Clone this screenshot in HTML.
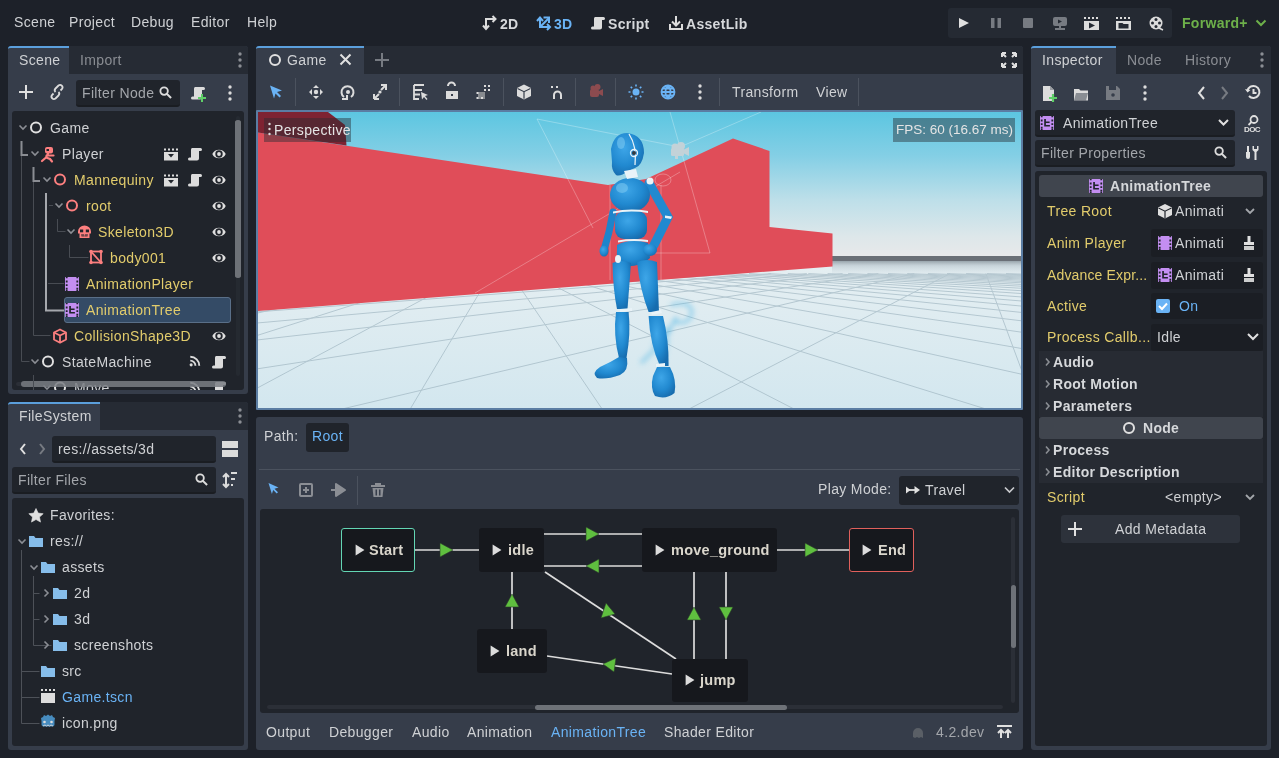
<!DOCTYPE html>
<html><head><meta charset="utf-8">
<style>
*{box-sizing:border-box;margin:0;padding:0}
html,body{width:1279px;height:758px;overflow:hidden;background:#1d2129;font-family:"Liberation Sans",sans-serif;font-size:14px;color:#cfd1d4}
.a{position:absolute}
.t{position:absolute;white-space:nowrap;line-height:16px;letter-spacing:0.35px;will-change:transform}
.b{font-weight:bold;letter-spacing:0.3px}
.panel{position:absolute;background:#363d4a;border-radius:3px}
.tabbar{position:absolute;background:#262b34}
.tab{position:absolute;background:#363d4a;border-top:2px solid #5b9fdc}
.box{position:absolute;background:#20242b;border-radius:3px}
.le{position:absolute;background:#20242b;border-radius:3px;border-bottom:2px solid #1a1d22}
.dim{color:#8a8d93}
.yel{color:#e2cc6c}
.blue{color:#6ab3f5}
svg.ov{position:absolute;left:0;top:0;width:1279px;height:758px;overflow:visible}
</style></head><body>
<svg width="0" height="0" style="position:absolute">
<defs>
<symbol id="chev" viewBox="0 0 10 10"><path d="M1.5 3.5 L5 7 L8.5 3.5" fill="none" stroke="#8b8e94" stroke-width="1.6"/></symbol>
<symbol id="chevr" viewBox="0 0 10 10"><path d="M3.5 1.5 L7 5 L3.5 8.5" fill="none" stroke="#8b8e94" stroke-width="1.6"/></symbol>
<symbol id="eye" viewBox="0 0 14 14"><path d="M0.3 7C2.5 1.2 11.5 1.2 13.7 7C11.5 12.8 2.5 12.8 0.3 7Z" fill="#e0e0e0"/><circle cx="7" cy="7" r="3.7" fill="#20242b"/><circle cx="7" cy="7" r="1.9" fill="#e0e0e0"/></symbol>
<symbol id="clap" viewBox="0 0 16 14"><rect x="1" y="5" width="14" height="8.5" fill="#dcdcdc"/><path d="M1 1.5h2v2h-2zM5 1.5h2v2h-2zM9 1.5h2v2h-2zM13 1.5h2v2h-2z" fill="#dcdcdc"/><path d="M5 7h6l-3 3.5z" fill="#20242b"/></symbol>
<symbol id="scr" viewBox="0 0 14 14"><path d="M4 1h8.5a1.5 1.5 0 0 1 0 3H11v7.5a2 2 0 0 1-2 2H1.5a1.5 1.5 0 0 1 0-3H3V3a2 2 0 0 1 1-2z" fill="#dcdcdc"/></symbol>
<symbol id="sig" viewBox="0 0 14 14"><circle cx="2.5" cy="11.5" r="1.8" fill="#dcdcdc"/><path d="M1.5 6.5a6 6 0 0 1 6 6M1.5 2a10.5 10.5 0 0 1 10.5 10.5" fill="none" stroke="#dcdcdc" stroke-width="2.2"/></symbol>
<symbol id="folder" viewBox="0 0 16 14"><path d="M1 2h5l1.5 2H15v9H1z" fill="#86bdea"/></symbol>
<symbol id="animp" viewBox="0 0 14 14"><rect x="0" y="0" width="14" height="14" fill="#c38ef1"/><path d="M0.8 0h1.8v1.2H0.8zM0.8 3.6h1.8v1.8H0.8zM0.8 7.2h1.8v1.8H0.8zM0.8 10.8h1.8v1.8H0.8zM11.4 0h1.8v1.2h-1.8zM11.4 3.6h1.8v1.8h-1.8zM11.4 7.2h1.8v1.8h-1.8zM11.4 10.8h1.8v1.8h-1.8zM0.8 12.8h1.8V14H0.8zM11.4 12.8h1.8V14h-1.8z" fill="#20242b"/></symbol>
<symbol id="animt" viewBox="0 0 14 14"><rect x="0" y="0" width="14" height="14" fill="#c38ef1"/><path d="M0.8 0h1.8v1.2H0.8zM0.8 3.6h1.8v1.8H0.8zM0.8 7.2h1.8v1.8H0.8zM0.8 10.8h1.8v1.8H0.8zM11.4 0h1.8v1.2h-1.8zM11.4 3.6h1.8v1.8h-1.8zM11.4 7.2h1.8v1.8h-1.8zM11.4 10.8h1.8v1.8h-1.8zM0.8 12.8h1.8V14H0.8zM11.4 12.8h1.8V14h-1.8z" fill="#20242b"/><path d="M4.2 2.9h1.7v7.6H4.2zM5.9 5.6h3.7v1.5H5.9zM4.2 8.9h5.7v1.6H4.2z" fill="#20242b"/></symbol>
<symbol id="search" viewBox="0 0 14 14"><circle cx="5.5" cy="5.5" r="4" fill="none" stroke="#dcdcdc" stroke-width="2"/><path d="M8.5 8.5L13 13" stroke="#dcdcdc" stroke-width="2.2"/></symbol>
<symbol id="kebab" viewBox="0 0 4 16"><circle cx="2" cy="2" r="1.7" fill="#dcdcdc"/><circle cx="2" cy="8" r="1.7" fill="#dcdcdc"/><circle cx="2" cy="14" r="1.7" fill="#dcdcdc"/></symbol>
<symbol id="kebabg" viewBox="0 0 4 16"><circle cx="2" cy="2" r="1.7" fill="#8b8e94"/><circle cx="2" cy="8" r="1.7" fill="#8b8e94"/><circle cx="2" cy="14" r="1.7" fill="#8b8e94"/></symbol>
<symbol id="ptri" viewBox="0 0 10 10"><path d="M1.5 0L9.5 5L1.5 10z" fill="#dcdcdc"/></symbol>
</defs>
</svg>

<!-- MENU -->
<div class="t" style="left:14px;top:14px">Scene</div>
<div class="t" style="left:69px;top:14px">Project</div>
<div class="t" style="left:131px;top:14px">Debug</div>
<div class="t" style="left:191px;top:14px">Editor</div>
<div class="t" style="left:247px;top:14px">Help</div>
<!-- TOP CENTER -->
<svg class="ov">
<!-- 2D icon -->
<g fill="none" stroke="#dcdcdc" stroke-width="2">
<path d="M486 29V19h9"/><path d="M483 25.5l3 3.5 3-3.5"/><path d="M492.5 16l3 3-3 3"/>
</g>
<!-- 3D icon -->
<g fill="none" stroke="#6ab3f5" stroke-width="2">
<path d="M540 28V18"/><path d="M537 21l3-3.5 3 3.5"/><path d="M540 27H549.5"/><path d="M547 24l3 3-3 3"/><path d="M540.5 26.5L548.5 18.5"/><path d="M543.5 17.5h5.5v5.5"/>
</g>
<!-- script -->
<use href="#scr" x="591" y="16" width="14" height="14"/>
<!-- assetlib -->
<g fill="none" stroke="#dcdcdc" stroke-width="2"><path d="M676 16v9"/><path d="M672 21.5l4 4 4-4"/><path d="M670 24v5h12v-5"/></g>
</svg>
<div class="t b" style="left:500px;top:16px;color:#d6d8db">2D</div>
<div class="t b blue" style="left:554px;top:16px">3D</div>
<div class="t b" style="left:608px;top:16px;color:#d6d8db">Script</div>
<div class="t b" style="left:686px;top:16px;color:#d6d8db">AssetLib</div>

<!-- PLAY BAR -->
<div class="a" style="left:948px;top:8px;width:224px;height:30px;background:#252a33;border-radius:3px"></div>
<svg class="ov">
<path d="M959 18L969 23L959 28z" fill="#e0e0e0"/>
<rect x="991" y="18" width="3.5" height="10" fill="#777b82"/><rect x="997.5" y="18" width="3.5" height="10" fill="#777b82"/>
<rect x="1023" y="18" width="10" height="10" rx="1" fill="#777b82"/>
<rect x="1053" y="17" width="14" height="9" rx="2" fill="#777b82"/><path d="M1058 19.5l4 2-4 2z" fill="#252a33"/><rect x="1059" y="26" width="2" height="2.5" fill="#777b82"/><rect x="1055" y="28" width="10" height="2" fill="#777b82"/>
<g><rect x="1084" y="21" width="15" height="9" fill="#dcdcdc"/><path d="M1084 17h2v2h-2zM1088 17h2v2h-2zM1092 17h2v2h-2zM1096 17h2v2h-2z" fill="#dcdcdc"/><path d="M1089 22.5l6 3-6 3z" fill="#252a33"/></g>
<g><rect x="1116" y="21" width="15" height="9" fill="#dcdcdc"/><path d="M1116 17h2v2h-2zM1120 17h2v2h-2zM1124 17h2v2h-2zM1128 17h2v2h-2z" fill="#dcdcdc"/><path d="M1118.5 23h4l1 1h5v4.5h-10z" fill="#252a33"/></g>
<g><circle cx="1156" cy="23" r="6.5" fill="#dcdcdc"/><circle cx="1156" cy="19.5" r="1.5" fill="#252a33"/><circle cx="1156" cy="26.5" r="1.5" fill="#252a33"/><circle cx="1152.5" cy="23" r="1.5" fill="#252a33"/><circle cx="1159.5" cy="23" r="1.5" fill="#252a33"/><path d="M1159 28l4 2" stroke="#dcdcdc" stroke-width="1.5"/></g>
<path d="M1256.5 20.5l4.5 4.5 4.5-4.5" fill="none" stroke="#6db04a" stroke-width="2"/>
</svg>
<div class="t b" style="left:1182px;top:15px;color:#6db04a">Forward+</div>
<!-- LEFT DOCK: Scene -->
<div class="panel" style="left:8px;top:46px;width:240px;height:348px"></div>
<div class="tabbar" style="left:69px;top:46px;width:179px;height:28px;border-top-right-radius:3px"></div>
<div class="tab" style="left:8px;top:46px;width:61px;height:28px;border-top-left-radius:3px"></div>
<div class="t" style="left:19px;top:52px">Scene</div>
<div class="t dim" style="left:80px;top:52px">Import</div>
<div class="le" style="left:76px;top:80px;width:104px;height:27px"></div>
<div class="t dim" style="left:82px;top:85px;color:#a3a6ab">Filter Node</div>
<div class="box" style="left:12px;top:111px;width:232px;height:279px"></div>
<svg class="ov">
<use href="#kebabg" x="238" y="52" width="4" height="16"/>
<path d="M26 85v14M19 92h14" stroke="#e0e0e0" stroke-width="2"/>
<g fill="none" stroke="#dcdcdc" stroke-width="1.8"><path d="M53.5 93.5l-1.5 1.5a2.5 2.5 0 0 0 3.5 3.5l3-3a2.5 2.5 0 0 0 0-3.5"/><path d="M60.5 90.5l1.5-1.5a2.5 2.5 0 0 0-3.5-3.5l-3 3a2.5 2.5 0 0 0 0 3.5"/></g>
<use href="#search" x="159" y="86" width="13" height="13"/>
<use href="#scr" x="191" y="86" width="14" height="14"/>
<path d="M202 94v8M198 98h8" stroke="#5fd068" stroke-width="2"/>
<use href="#kebab" x="228" y="85" width="4" height="16"/>
<!-- scrollbar -->
<rect x="235" y="120" width="6" height="158" rx="3" fill="#6b6f76"/>
<rect x="236" y="116" width="4" height="260" rx="2" fill="#2a2e36" opacity="0.6"/>
<rect x="235" y="120" width="6" height="158" rx="3" fill="#6e7278"/>
<defs><clipPath id="clipTree"><rect x="12" y="111" width="232" height="279"/></clipPath></defs>
<!-- tree lines -->
<g stroke="#484c53" stroke-width="1" fill="none">
<path d="M21.5 155v206.5h8"/>
<path d="M33.5 181v154.5h17"/>
<path d="M49 205.5h4"/>
<path d="M57.5 219v12.5h8"/>
<path d="M69.5 245v12.5h19"/>
<path d="M48 283.5h16"/>
<path d="M33.5 375v15"/>
</g>
<path d="M21.5 141v14h6.5" stroke="#8a8d93" stroke-width="2" fill="none"/>
<path d="M33.5 167v14h6.5" stroke="#8a8d93" stroke-width="2" fill="none"/>
<path d="M46 193v117.5h18" stroke="#a5a8ad" stroke-width="2" fill="none"/>
<!-- arrows -->
<use href="#chev" x="18" y="122" width="10" height="10"/>
<use href="#chev" x="30" y="148" width="10" height="10"/>
<use href="#chev" x="42" y="174" width="10" height="10"/>
<use href="#chev" x="54" y="200" width="10" height="10"/>
<use href="#chev" x="66" y="226" width="10" height="10"/>
<use href="#chev" x="30" y="356" width="10" height="10"/>
<g clip-path="url(#clipTree)"><use href="#chev" x="42" y="382" width="10" height="10"/></g>
<!-- icons -->
<circle cx="36" cy="127.5" r="5" fill="none" stroke="#e0e0e0" stroke-width="2"/>
<g><rect x="45" y="147" width="8" height="6.5" rx="2" fill="#fc7f7f"/><rect x="46.5" y="149" width="2.5" height="2" fill="#20242b"/><path d="M48 153.5l-2 4 M46.5 155.5h7 M46 157.5l-4 3.5 M46 157.5l4 1.5 2 2.5" stroke="#fc7f7f" stroke-width="2.2" fill="none" stroke-linecap="round"/></g>
<circle cx="60" cy="179.5" r="5" fill="none" stroke="#fc7f7f" stroke-width="2"/>
<circle cx="72" cy="205.5" r="5" fill="none" stroke="#fc7f7f" stroke-width="2"/>
<g><path d="M78 231.5a6.5 6 0 0 1 13 0v2h-1.5v4.5h-10v-4.5H78z" fill="#fc7f7f"/><rect x="80" y="229.5" width="3.2" height="2.8" fill="#20242b"/><rect x="85.8" y="229.5" width="3.2" height="2.8" fill="#20242b"/><path d="M81.5 234h6v2.5h-6z" fill="#20242b"/><path d="M83 234v1.2M84.5 234v1.2M86 234v1.2M83 236.5v-1.2M84.5 236.5v-1.2M86 236.5v-1.2" stroke="#fc7f7f" stroke-width="0.9"/></g>
<g fill="none" stroke="#fc7f7f" stroke-width="1.8"><rect x="91" y="251.5" width="10" height="11"/><path d="M91 251.5l10 11"/></g>
<g fill="#fc7f7f"><circle cx="91" cy="251.5" r="1.8"/><circle cx="101" cy="251.5" r="1.8"/><circle cx="91" cy="262.5" r="1.8"/><circle cx="101" cy="262.5" r="1.8"/></g>
<use href="#animp" x="65" y="277" width="14" height="14"/>
<use href="#animt" x="65" y="303" width="14" height="14"/>
<g fill="none" stroke="#fc7f7f" stroke-width="1.8" stroke-linejoin="round"><path d="M60 329.5l6 3v7l-6 3.2-6-3.2v-7z"/><path d="M54 332.5l6 3 6-3M60 335.5v7"/></g>
<circle cx="48" cy="361.5" r="5" fill="none" stroke="#e0e0e0" stroke-width="2"/>
<g clip-path="url(#clipTree)"><circle cx="60" cy="387.5" r="5" fill="none" stroke="#e0e0e0" stroke-width="2"/></g>
<!-- right icons -->
<use href="#clap" x="163" y="147" width="16" height="14"/>
<use href="#scr" x="188" y="147" width="14" height="14"/>
<use href="#eye" x="212" y="147" width="14" height="14"/>
<use href="#clap" x="163" y="173" width="16" height="14"/>
<use href="#scr" x="188" y="173" width="14" height="14"/>
<use href="#eye" x="212" y="173" width="14" height="14"/>
<use href="#eye" x="212" y="199" width="14" height="14"/>
<use href="#eye" x="212" y="225" width="14" height="14"/>
<use href="#eye" x="212" y="251" width="14" height="14"/>
<use href="#eye" x="212" y="329" width="14" height="14"/>
<use href="#sig" x="189" y="355" width="12" height="12"/>
<use href="#scr" x="212" y="355" width="14" height="14"/>
<g clip-path="url(#clipTree)"><use href="#sig" x="189" y="381" width="12" height="12"/>
<use href="#scr" x="212" y="381" width="14" height="14"/></g>
</svg>
<!-- selection -->
<div class="a" style="left:64px;top:297px;width:167px;height:26px;background:#344b66;border:1px solid #5a6f88;border-radius:3px"></div>
<div class="t" style="left:50px;top:120px">Game</div>
<div class="t" style="left:62px;top:146px">Player</div>
<div class="t yel" style="left:74px;top:172px">Mannequiny</div>
<div class="t yel" style="left:86px;top:198px">root</div>
<div class="t yel" style="left:98px;top:224px">Skeleton3D</div>
<div class="t yel" style="left:110px;top:250px">body001</div>
<div class="t yel" style="left:86px;top:276px">AnimationPlayer</div>
<div class="t yel" style="left:86px;top:302px">AnimationTree</div>
<div class="t yel" style="left:74px;top:328px">CollisionShape3D</div>
<div class="t" style="left:62px;top:354px">StateMachine</div>
<div class="a" style="left:12px;top:380px;width:232px;height:10px;overflow:hidden"><div class="t" style="left:62px;top:0px">Move</div></div>
<svg class="ov">
<use href="#animt" x="65" y="303" width="14" height="14"/>
<rect x="16" y="382" width="8" height="4" rx="2" fill="#2b2f37"/>
<rect x="21" y="381" width="205" height="6" rx="3" fill="#7a7e84" opacity="0.85"/>
<path d="M33.5 375v15" stroke="#484c53" stroke-width="1"/>
</svg>

<!-- FILESYSTEM DOCK -->
<div class="panel" style="left:8px;top:402px;width:240px;height:348px"></div>
<div class="tabbar" style="left:100px;top:402px;width:148px;height:28px;border-top-right-radius:3px"></div>
<div class="tab" style="left:8px;top:402px;width:92px;height:28px;border-top-left-radius:3px"></div>
<div class="t" style="left:19px;top:408px">FileSystem</div>
<div class="le" style="left:52px;top:436px;width:164px;height:27px"></div>
<div class="t" style="left:58px;top:441px">res://assets/3d</div>
<div class="le" style="left:12px;top:467px;width:204px;height:27px"></div>
<div class="t" style="left:18px;top:472px;color:#a3a6ab">Filter Files</div>
<div class="box" style="left:12px;top:498px;width:232px;height:248px"></div>
<svg class="ov">
<use href="#kebabg" x="238" y="408" width="4" height="16"/>
<path d="M25 444l-4 5 4 5" fill="none" stroke="#e0e0e0" stroke-width="2"/>
<path d="M40 444l4 5-4 5" fill="none" stroke="#777b82" stroke-width="2"/>
<rect x="222" y="441" width="16" height="7" fill="#dcdcdc"/><rect x="222" y="450" width="16" height="7" fill="#dcdcdc"/>
<use href="#search" x="195" y="473" width="13" height="13"/>
<g stroke="#dcdcdc" stroke-width="2" fill="none"><path d="M226 474v13M223 477l3-3 3 3M223 484l3 3 3-3"/><path d="M231 473h6M231 479h4M231 485h2"/></g>
<path d="M36 508.5l2.2 4.6 5 .6-3.7 3.4 1 5-4.5-2.6-4.5 2.6 1-5-3.7-3.4 5-.6z" fill="#e0e0e0" stroke="#e0e0e0" stroke-width="0.6" stroke-linejoin="round"/>
<g stroke="#4d5158" stroke-width="1" fill="none">
<path d="M21.5 550v173.5h18"/>
<path d="M33.5 576v69.5h18"/>
<path d="M33.5 593.5h6M33.5 619.5h6M21.5 671.5h18M21.5 697.5h18"/>
</g>
<use href="#chev" x="17" y="536" width="10" height="10"/>
<use href="#chev" x="29" y="562" width="10" height="10"/>
<use href="#chevr" x="41" y="588" width="10" height="10"/>
<use href="#chevr" x="41" y="614" width="10" height="10"/>
<use href="#chevr" x="41" y="640" width="10" height="10"/>
<use href="#folder" x="28" y="534" width="16" height="14"/>
<use href="#folder" x="40" y="560" width="16" height="14"/>
<use href="#folder" x="52" y="586" width="16" height="14"/>
<use href="#folder" x="52" y="612" width="16" height="14"/>
<use href="#folder" x="52" y="638" width="16" height="14"/>
<use href="#folder" x="40" y="664" width="16" height="14"/>
<g><rect x="41" y="693" width="14" height="10" fill="#dcdcdc"/><path d="M41 689h2v2h-2zM45 689h2v2h-2zM49 689h2v2h-2zM53 689h2v2h-2z" fill="#dcdcdc"/></g>
<g><path d="M41 718l2-1 1-2 2 1 2-1.5 2 1.5 2-1 1 2 2 1-.5 3v3.5a2 2 0 0 1-2 2h-9a2 2 0 0 1-2-2v-3.5z" fill="#478cbf"/><circle cx="44.5" cy="722" r="1.3" fill="#dcdcdc"/><circle cx="51.5" cy="722" r="1.3" fill="#dcdcdc"/><path d="M43 726l2-1 1.5 1 1.5-1 1.5 1 1.5-1 2 1" stroke="#dcdcdc" stroke-width="0.9" fill="none"/></g>
</svg>
<div class="t" style="left:50px;top:507px">Favorites:</div>
<div class="t" style="left:50px;top:533px">res://</div>
<div class="t" style="left:62px;top:559px">assets</div>
<div class="t" style="left:74px;top:585px">2d</div>
<div class="t" style="left:74px;top:611px">3d</div>
<div class="t" style="left:74px;top:637px">screenshots</div>
<div class="t" style="left:62px;top:663px">src</div>
<div class="t blue" style="left:62px;top:689px">Game.tscn</div>
<div class="t" style="left:62px;top:715px">icon.png</div>
<!-- CENTER -->
<div class="panel" style="left:256px;top:46px;width:767px;height:364px"></div>
<div class="tabbar" style="left:364px;top:46px;width:659px;height:28px;border-top-right-radius:3px"></div>
<div class="tab" style="left:256px;top:46px;width:108px;height:28px;border-top-left-radius:3px"></div>
<div class="t" style="left:287px;top:52px">Game</div>
<div class="t" style="left:732px;top:84px">Transform</div>
<div class="t" style="left:816px;top:84px">View</div>
<svg class="ov">
<circle cx="275" cy="60" r="5" fill="none" stroke="#e0e0e0" stroke-width="2"/>
<path d="M340.5 54.5l10 10M350.5 54.5l-10 10" stroke="#e0e0e0" stroke-width="2"/>
<path d="M382 53v14M375 60h14" stroke="#777b82" stroke-width="2"/>
<g stroke="#e0e0e0" stroke-width="2" fill="none"><path d="M1002 53h4M1002 53v4M1002 53l4 4M1016 53h-4M1016 53v4M1016 53l-4 4M1002 67h4M1002 67v-4M1002 67l4-4M1016 67h-4M1016 67v-4M1016 67l-4-4"/></g>
<!-- toolbar -->
<path d="M270 85.5l12 5-5 1.5 4 4-1.5 1.5-4-4-1.5 5z" fill="#6ab3f5"/>
<g stroke="#4b525e" stroke-width="1"><path d="M295.5 78v28M399.5 78v28M503.5 78v28M575.5 78v28M615.5 78v28M719.5 78v28M858.5 78v28"/></g>
<g fill="#dcdcdc"><circle cx="316" cy="92" r="2.2"/><path d="M316 85l-3 3h6zM316 99l-3-3h6zM309 92l3-3v6zM323 92l-3-3v6z"/></g>
<g fill="none" stroke="#dcdcdc" stroke-width="2"><path d="M344 97a6 6 0 1 1 7 0"/></g><circle cx="348" cy="92" r="2" fill="#dcdcdc"/><path d="M342 99h5v-4" fill="none" stroke="#dcdcdc" stroke-width="2"/>
<g fill="none" stroke="#dcdcdc" stroke-width="2"><path d="M381 85h5v5M386 85l-5 5M374 99v-5M374 99h5M374 99l5-5"/></g><circle cx="380" cy="92" r="1.6" fill="#dcdcdc"/>
<g fill="none" stroke="#dcdcdc" stroke-width="1.8"><path d="M414 85h10M414 85v14h5M414 90h8M414 94.5h6"/></g><path d="M421 92l7 3-3 1 2.5 3-1 1-2.5-3-2 2.5z" fill="#dcdcdc"/>
<g><path d="M448 86a3.5 3.5 0 0 1 7 0" fill="none" stroke="#dcdcdc" stroke-width="2"/><rect x="446" y="91" width="12" height="8" fill="#dcdcdc"/><rect x="451" y="94" width="2" height="2" fill="#363d4a"/></g>
<g fill="#dcdcdc"><rect x="478" y="92" width="7" height="7" fill="#888b90"/><path d="M484 85h2v2h-2zM488 85h2v2h-2zM484 89h2v2h-2zM488 89h2v2h-2zM476.5 92h2v2h-2zM476.5 97h2v2h-2zM481 97h2v2h-2z"/></g>
<g><path d="M524 84.5l7 3.5v8l-7 3.5-7-3.5v-8z" fill="#dcdcdc"/><path d="M517.5 88.5l6.5 3.2 6.5-3.2M524 91.7v7" stroke="#363d4a" stroke-width="1.2" fill="none"/></g>
<g><rect x="551" y="86" width="2" height="2" fill="#dcdcdc"/><rect x="556" y="86" width="2" height="2" fill="#dcdcdc"/><path d="M554 99v-4a3.5 3.5 0 0 1 7 0v4" fill="none" stroke="#dcdcdc" stroke-width="2"/></g>
<g fill="#8c4b4f"><rect x="590" y="89" width="9" height="8" rx="2"/><circle cx="593" cy="88" r="2.5"/><circle cx="597.5" cy="87" r="3"/><path d="M599 91l4-2v7l-4-2z"/></g>
<g fill="#6ab3f5"><circle cx="636" cy="92" r="3.5"/></g><g stroke="#6ab3f5" stroke-width="1.6"><path d="M636 84.5v2M636 97.5v2M628.5 92h2M641.5 92h2M630.7 86.7l1.4 1.4M639.9 95.9l1.4 1.4M630.7 97.3l1.4-1.4M639.9 88.1l1.4-1.4"/></g>
<g fill="none" stroke="#6ab3f5" stroke-width="1.8"><circle cx="668" cy="92" r="6.5"/><path d="M661.5 92h13M668 85.5c-3.5 3.5-3.5 9.5 0 13M668 85.5c3.5 3.5 3.5 9.5 0 13M662.5 88.5h11M662.5 95.5h11"/></g>
<use href="#kebab" x="698" y="84" width="4" height="16"/>
</svg>

<!-- VIEWPORT -->
<div class="a" style="left:256px;top:110px;width:767px;height:300px;background:#5b7da3;border-radius:1px"></div>
<svg class="ov" style="clip-path:inset(112px 258px 350px 258px)">
<defs>
<linearGradient id="sky" x1="0" y1="0" x2="0" y2="1">
<stop offset="0" stop-color="#5cc6e1"/><stop offset="0.3" stop-color="#84cfe5"/><stop offset="0.6" stop-color="#bddfe9"/><stop offset="0.85" stop-color="#dde7ea"/><stop offset="1" stop-color="#e9e9ea"/>
</linearGradient>
<linearGradient id="floor" x1="0" y1="0" x2="0" y2="1">
<stop offset="0" stop-color="#e6eff2"/><stop offset="1" stop-color="#d3e7ef"/>
</linearGradient>
<radialGradient id="shadow" cx="0.5" cy="0.5" r="0.5"><stop offset="0" stop-color="#56b8e0" stop-opacity="0.8"/><stop offset="1" stop-color="#56b8e0" stop-opacity="0"/></radialGradient>
</defs>
<rect x="258" y="112" width="763" height="146" fill="url(#sky)"/>
<rect x="258" y="257" width="763" height="151" fill="url(#floor)"/>
<!-- horizon band -->
<rect x="832" y="256" width="190" height="5" fill="#6a6f76"/>
<!-- grid lines -->
<defs><linearGradient id="hz" x1="0" y1="0" x2="0" y2="1"><stop offset="0" stop-color="#8f9ca3" stop-opacity="0.9"/><stop offset="0.3" stop-color="#b5c3ca" stop-opacity="0.6"/><stop offset="1" stop-color="#d5e3e9" stop-opacity="0"/></linearGradient></defs><rect x="832" y="261" width="190" height="16" fill="url(#hz)"/>
<g stroke="#98afbb" stroke-width="1" fill="none" opacity="0.6">
<path d="M209.0 273.8L213.2 273.6"/>
<path d="M208.2 275.1L233.5 273.6"/>
<path d="M208.4 276.4L252.8 273.6"/>
<path d="M208.7 278.0L273.0 273.6"/>
<path d="M209.1 279.9L292.4 273.6"/>
<path d="M209.6 282.1L312.5 273.6"/>
<path d="M208.3 285.1L332.6 273.6"/>
<path d="M208.8 288.7L352.1 273.6"/>
<path d="M209.4 293.4L372.1 273.6"/>
<path d="M210.2 299.7L391.7 273.6"/>
<path d="M211.4 308.8L411.7 273.6"/>
<path d="M208.9 324.1L431.4 273.6"/>
<path d="M1071.0 276.3L1057.5 273.6"/>
<path d="M210.6 350.3L451.3 273.6"/>
<path d="M1070.9 292.1L1021.6 273.6"/>
<path d="M214.4 411.0L471.0 273.6"/>
<path d="M1053.8 457.1L985.8 273.6"/>
<path d="M381.3 457.5L490.9 273.6"/>
<path d="M598.9 455.8L950.0 273.6"/>
<path d="M632.2 453.6L510.7 273.6"/>
<path d="M217.0 438.6L914.2 273.6"/>
<path d="M873.4 449.8L530.6 273.6"/>
<path d="M216.5 375.1L878.3 273.6"/>
<path d="M1057.0 431.1L550.4 273.6"/>
<path d="M216.3 344.6L842.5 273.6"/>
<path d="M1063.7 383.6L570.3 273.6"/>
<path d="M208.3 327.4L806.8 273.6"/>
<path d="M1067.6 356.5L590.0 273.6"/>
<path d="M209.6 315.4L771.1 273.6"/>
<path d="M1070.1 339.1L610.1 273.6"/>
<path d="M210.5 307.0L734.9 273.6"/>
<path d="M1062.9 325.8L629.7 273.6"/>
<path d="M211.1 300.7L699.2 273.6"/>
<path d="M1065.3 317.0L649.3 273.6"/>
<path d="M211.6 295.8L663.5 273.6"/>
<path d="M1067.2 310.3L669.5 273.6"/>
<path d="M208.2 292.1L627.9 273.6"/>
<path d="M1068.7 304.9L689.0 273.6"/>
<path d="M208.9 289.0L591.4 273.6"/>
<path d="M1069.9 300.6L709.2 273.6"/>
<path d="M209.4 286.3L555.8 273.6"/>
<path d="M1070.9 296.9L728.7 273.6"/>
<path d="M209.9 284.1L520.2 273.6"/>
<path d="M1067.0 293.6L749.0 273.6"/>
<path d="M210.3 282.2L484.7 273.6"/>
<path d="M1068.1 291.0L768.5 273.6"/>
<path d="M208.1 280.6L449.2 273.6"/>
<path d="M1069.0 288.8L787.8 273.6"/>
<path d="M208.6 279.2L412.4 273.6"/>
<path d="M1069.8 286.9L808.3 273.6"/>
<path d="M209.0 277.9L376.9 273.6"/>
<path d="M1070.5 285.1L827.6 273.6"/>
<path d="M209.4 276.8L341.4 273.6"/>
<path d="M1067.8 283.5L848.1 273.6"/>
<path d="M209.7 275.8L306.0 273.6"/>
<path d="M1068.5 282.1L867.4 273.6"/>
<path d="M208.1 274.9L268.9 273.6"/>
<path d="M1069.2 280.9L888.0 273.6"/>
<path d="M208.5 274.1L233.5 273.6"/>
<path d="M1069.8 279.8L907.2 273.6"/>
<path d="M1070.3 278.8L927.9 273.6"/>
<path d="M1070.8 277.9L947.0 273.6"/>
<path d="M1068.7 277.0L966.1 273.6"/>
<path d="M1069.3 276.3L986.9 273.6"/>
<path d="M1069.7 275.6L1006.0 273.6"/>
<path d="M1070.2 274.9L1026.9 273.6"/>
<path d="M1070.6 274.3L1045.9 273.6"/>
<path d="M1071.0 273.7L1066.8 273.6"/>
</g>
<!-- wall -->
<path d="M258 132.5L608 185L646 179L733 138.5L769.5 151L769.5 227L832.5 233.5L832.5 266.5L258 311z" fill="#e04d59"/>
<path d="M258 112L328 112L345 125L346.5 145.6L258 132.5z" fill="#7e2332"/>
<!-- camera gizmo -->
<g stroke="#ffffff" stroke-opacity="0.28" stroke-width="1" fill="none">
<path d="M537 119L680 147L710 253L640 253"/><path d="M537 119L593 228"/><path d="M670 112L680 147L761 112"/><path d="M475 293L680 172"/><path d="M610 185V280M661 185V280"/><ellipse cx="663" cy="180" rx="8" ry="6"/>
</g>
<!-- shadow -->
<defs><filter id="blur2" x="-50%" y="-50%" width="200%" height="200%"><feGaussianBlur stdDeviation="2.6"/></filter></defs>
<g filter="url(#blur2)" fill="none" stroke="#4fb6e4" stroke-opacity="0.45" stroke-linecap="round">
<path d="M672 305Q690 300 692 312Q690 325 676 322" stroke-width="4"/><path d="M676 318L664 340L642 362" stroke-width="4"/><path d="M668 330L655 345" stroke-width="5"/><path d="M668 340L662 368" stroke-width="3"/>
</g>
<!-- character -->
<defs>
<radialGradient id="bl" cx="0.4" cy="0.35" r="0.7"><stop offset="0" stop-color="#3ea6e8"/><stop offset="0.6" stop-color="#2189d0"/><stop offset="1" stop-color="#176cae"/></radialGradient>
</defs>
<g stroke="url(#bl)" stroke-linecap="round" fill="none">
<path d="M613 212L609 232L604 250" stroke-width="7" stroke="#1f84cb"/>
<path d="M649 183L668 217L654 245" stroke-width="9" stroke="#2189d0"/>
</g>
<g fill="url(#bl)">
<path d="M611 149Q614 133 627 133Q644 135 644 153Q642 166 635 168L628 171Q620 177 616 175Q611 170 612 162z"/>
<ellipse cx="630" cy="195" rx="20" ry="17"/>
<rect x="615" y="211" width="32" height="28" rx="9"/>
<path d="M617 245Q632 237 648 243L650 258Q640 268 622 266Q616 262 617 250z"/>
<ellipse cx="604" cy="251" rx="4.5" ry="5.5"/>
<ellipse cx="650" cy="250" rx="7" ry="6"/>
<path d="M612.5 263Q621 259 631 263L627.5 309L617 309Q613 290 612.5 263z"/>
<path d="M616 312L628.6 312Q631 332 626.5 358L619 358Q613 335 616 312z"/>
<path d="M627 358Q629 371 620 375Q606 380 597 378Q591 373 600 367Q611 362 619 357z"/>
<path d="M637 262Q647 258 657 262L659 312L648.6 312Q640 290 637 262z"/>
<path d="M648.6 316L663 316Q669 340 668.6 366L660 366Q650 345 648.6 316z"/>
<path d="M657 367L670 367Q677 380 674.5 393Q666 400 655 396Q650 388 653 376z"/>
</g>
<g fill="#e9f3f8">
<path d="M624 171L636 169L638 177L627 179z"/><circle cx="650" cy="181" r="3.5"/><path d="M613 211.5Q630 208 648 211L648 213Q630 210 613 213.5z"/><path d="M618 240.5Q632 238 648 240L648 242Q632 240 618 242.5z"/><ellipse cx="618" cy="259" rx="3" ry="4"/><path d="M620 309L632 308L632 311L620 312z"/><path d="M651 312L661 310L662 313L652 315z"/><path d="M656 364L665 363L665 366L656 367z"/><path d="M665 215.5L672 216.5L671 219L665 218z"/>
</g>
<g fill="#7fcbf2" opacity="0.55"><ellipse cx="621" cy="143" rx="4" ry="6"/><ellipse cx="622" cy="188" rx="6" ry="5"/></g>
<path d="M629 134Q637 146 635 165" fill="none" stroke="#e9f3f8" stroke-width="1.3"/>
<circle cx="634" cy="153" r="3.5" fill="none" stroke="#e9f3f8" stroke-width="1.3"/><circle cx="634" cy="153" r="2" fill="#333a40"/>
<!-- camera icon -->
<g fill="#c3d2d8"><circle cx="675" cy="147" r="3.5"/><circle cx="681" cy="146" r="4"/><rect x="671" y="148" width="13" height="8" rx="1.5"/><path d="M683 150l6-3v9l-6-3z"/><rect x="675" y="155" width="3" height="4"/></g>
</svg>
<div class="a" style="left:264px;top:118px;width:87px;height:24px;background:rgba(40,44,52,0.45)"></div>
<svg class="ov"><g fill="#dcdcdc"><circle cx="269.5" cy="124" r="1.2"/><circle cx="269.5" cy="129" r="1.2"/><circle cx="269.5" cy="134" r="1.2"/></g></svg>
<div class="t" style="left:274px;top:122px;color:#e4e4e4;font-size:14px">Perspective</div>
<div class="a" style="left:893px;top:118px;width:122px;height:24px;background:rgba(40,44,52,0.45)"></div>
<div class="t" style="left:896px;top:122px;color:#e4e4e4;font-size:13.5px;letter-spacing:0px">FPS: 60 (16.67 ms)</div>
<!-- BOTTOM PANEL -->
<div class="panel" style="left:256px;top:417px;width:767px;height:333px"></div>
<div class="t" style="left:264px;top:428px">Path:</div>
<div class="a" style="left:306px;top:423px;width:43px;height:29px;background:#20242b;border-radius:3px"></div>
<div class="t blue" style="left:312px;top:428px">Root</div>
<div class="a" style="left:259px;top:469px;width:761px;height:1px;background:#4b525e"></div>
<div class="t" style="left:818px;top:481px">Play Mode:</div>
<div class="a" style="left:899px;top:476px;width:120px;height:29px;background:#20242b;border-radius:3px"></div>
<div class="t" style="left:925px;top:482px">Travel</div>
<div class="a" style="left:260px;top:509px;width:759px;height:204px;background:#20242b;border-radius:3px"></div>
<svg class="ov">
<path d="M268.5 483l10 4.5-4 1.2 3.5 3.5-1.3 1.3-3.5-3.5-1.3 4z" fill="#6ab3f5"/>
<rect x="300" y="484" width="12" height="12" rx="1" fill="none" stroke="#8b8e94" stroke-width="2"/><path d="M306 487v6M303 490h6" stroke="#8b8e94" stroke-width="2"/>
<path d="M331 490h5M336 484l9 6-9 6z" fill="#8b8e94" stroke="#8b8e94" stroke-width="2" stroke-linejoin="round"/>
<path d="M357.5 476v29" stroke="#4b525e" stroke-width="1"/>
<g fill="#8b8e94"><rect x="371" y="485" width="14" height="2"/><rect x="375" y="483" width="6" height="2"/><path d="M372.5 488h11l-1 9h-9z"/></g>
<g fill="#363d4a"><rect x="375.5" y="489.5" width="1.5" height="6"/><rect x="379" y="489.5" width="1.5" height="6"/></g>
<path d="M908 490h7" stroke="#e0e0e0" stroke-width="1.8"/><path d="M914.5 486l5.5 4-5.5 4z" fill="#e0e0e0"/><path d="M906 486.5l4.5 3.5-4.5 3.5z" fill="#e0e0e0"/>
<path d="M1005 487.5l4.5 4.5 4.5-4.5" fill="none" stroke="#c8cacd" stroke-width="1.7"/>
<!-- graph connections -->
<g stroke="#dcdcdc" stroke-width="1.7" fill="none">
<path d="M415 550H479"/><path d="M544 534H642"/><path d="M544 566H642"/><path d="M777 550H849"/>
<path d="M512 572V629"/><path d="M694 572V659"/><path d="M726 572V659"/>
<path d="M545 572L676 659"/><path d="M547 656L672 674"/>
</g>
<g fill="#5fbf3f" stroke="#2a3a2a" stroke-width="1" stroke-opacity="0.6">
<path d="M440 543L453 550L440 557z"/>
<path d="M586 527L599 534L586 541z"/>
<path d="M599 559L586 566L599 573z"/>
<path d="M805 543L818 550L805 557z"/>
<path d="M505 607L512 594L519 607z"/>
<path d="M687 620L694 607L701 620z"/>
<path d="M719 607L726 620L733 607z"/>
<path d="M601 618L606 603L615 614z"/>
<path d="M616 658L603 664L614 672z"/>
</g>
<!-- scrollbars -->
<rect x="1011" y="517" width="4" height="186" rx="2" fill="#2b2f37"/>
<rect x="1011" y="585" width="5" height="63" rx="2.5" fill="#6e7278"/>
<rect x="267" y="705" width="736" height="4" rx="2" fill="#2b2f37"/>
<rect x="535" y="705" width="252" height="5" rx="2.5" fill="#6e7278"/>
</svg>
<!-- nodes -->
<div class="a" style="left:341px;top:528px;width:74px;height:44px;background:#16181d;border:1px solid #63d6b4;border-radius:3px"></div>
<div class="a" style="left:479px;top:528px;width:65px;height:44px;background:#16181d;border-radius:3px"></div>
<div class="a" style="left:642px;top:528px;width:135px;height:44px;background:#16181d;border-radius:3px"></div>
<div class="a" style="left:849px;top:528px;width:65px;height:44px;background:#16181d;border:1px solid #e0605c;border-radius:3px"></div>
<div class="a" style="left:477px;top:629px;width:70px;height:44px;background:#16181d;border-radius:3px"></div>
<div class="a" style="left:672px;top:659px;width:76px;height:43px;background:#16181d;border-radius:3px"></div>
<svg class="ov">
<use href="#ptri" x="354" y="544" width="11" height="12"/>
<use href="#ptri" x="491" y="544" width="11" height="12"/>
<use href="#ptri" x="654" y="544" width="11" height="12"/>
<use href="#ptri" x="861" y="544" width="11" height="12"/>
<use href="#ptri" x="489" y="645" width="11" height="12"/>
<use href="#ptri" x="684" y="674" width="11" height="12"/>
</svg>
<div class="t b" style="left:369px;top:542px;color:#dad6cc;font-size:14.5px;letter-spacing:0.25px">Start</div>
<div class="t b" style="left:508px;top:542px;color:#dad6cc;font-size:14.5px;letter-spacing:0.25px">idle</div>
<div class="t b" style="left:671px;top:542px;color:#dad6cc;font-size:14.5px;letter-spacing:0.25px">move_ground</div>
<div class="t b" style="left:878px;top:542px;color:#dad6cc;font-size:14.5px;letter-spacing:0.25px">End</div>
<div class="t b" style="left:506px;top:643px;color:#dad6cc;font-size:14.5px;letter-spacing:0.25px">land</div>
<div class="t b" style="left:700px;top:672px;color:#dad6cc;font-size:14.5px;letter-spacing:0.25px">jump</div>

<!-- bottom tabs -->
<div class="t" style="left:266px;top:724px">Output</div>
<div class="t" style="left:329px;top:724px">Debugger</div>
<div class="t" style="left:412px;top:724px">Audio</div>
<div class="t" style="left:467px;top:724px">Animation</div>
<div class="t blue" style="left:551px;top:724px">AnimationTree</div>
<div class="t" style="left:664px;top:724px">Shader Editor</div>
<div class="t" style="left:936px;top:724px;color:#a3a6ab">4.2.dev</div>
<svg class="ov">
<path d="M913 733a5 5 0 0 1 10 0v5l-2-1-2 1-2-1-2 1-2-1z" fill="#5a5f66"/>
<g stroke="#e0e0e0" stroke-width="2" fill="none"><path d="M997 726h15"/><path d="M1001 738v-8M998 733l3-3 3 3M1008 738v-8M1005 733l3-3 3 3"/></g>
</svg>
<!-- RIGHT DOCK -->
<div class="panel" style="left:1031px;top:46px;width:240px;height:704px"></div>
<div class="tabbar" style="left:1116px;top:46px;width:155px;height:28px;border-top-right-radius:3px"></div>
<div class="tab" style="left:1031px;top:46px;width:85px;height:28px;border-top-left-radius:3px"></div>
<div class="t" style="left:1042px;top:52px">Inspector</div>
<div class="t dim" style="left:1127px;top:52px">Node</div>
<div class="t dim" style="left:1185px;top:52px">History</div>
<div class="le" style="left:1035px;top:110px;width:200px;height:27px"></div>
<div class="t" style="left:1063px;top:115px">AnimationTree</div>
<div class="le" style="left:1035px;top:140px;width:200px;height:27px"></div>
<div class="t" style="left:1041px;top:145px;color:#a3a6ab">Filter Properties</div>
<div class="box" style="left:1035px;top:171px;width:232px;height:575px"></div>
<div class="a" style="left:1039px;top:175px;width:224px;height:22px;background:#40454e;border-radius:3px"></div>
<div class="t b" style="left:1110px;top:178px;color:#d6d8db">AnimationTree</div>
<div class="a" style="left:1151px;top:229px;width:112px;height:28px;background:#1b1e24;border-radius:3px"></div>
<div class="a" style="left:1151px;top:262px;width:112px;height:27px;background:#1b1e24;border-radius:3px"></div>
<div class="a" style="left:1151px;top:293px;width:112px;height:26px;background:#1b1e24;border-radius:3px"></div>
<div class="a" style="left:1151px;top:324px;width:112px;height:27px;background:#1b1e24;border-radius:3px"></div>
<div class="a" style="left:1039px;top:351px;width:224px;height:66px;background:#272b33"></div>
<div class="a" style="left:1039px;top:417px;width:224px;height:22px;background:#40454e;border-radius:3px"></div>
<div class="a" style="left:1039px;top:439px;width:224px;height:44px;background:#272b33"></div>
<div class="a" style="left:1061px;top:515px;width:179px;height:28px;background:#2d323b;border-radius:3px"></div>
<div class="t yel" style="left:1047px;top:203px">Tree Root</div>
<div class="t" style="left:1175px;top:203px">Animati</div>
<div class="t yel" style="left:1047px;top:235px">Anim Player</div>
<div class="t" style="left:1175px;top:235px">Animati</div>
<div class="t yel" style="left:1047px;top:267px;letter-spacing:0.15px">Advance Expr...</div>
<div class="t" style="left:1175px;top:267px">Animati</div>
<div class="t yel" style="left:1047px;top:298px">Active</div>
<div class="t blue" style="left:1179px;top:298px">On</div>
<div class="t yel" style="left:1047px;top:329px">Process Callb...</div>
<div class="t" style="left:1157px;top:329px">Idle</div>
<div class="t b" style="left:1053px;top:354px;color:#d6d8db">Audio</div>
<div class="t b" style="left:1053px;top:376px;color:#d6d8db">Root Motion</div>
<div class="t b" style="left:1053px;top:398px;color:#d6d8db">Parameters</div>
<div class="t b" style="left:1143px;top:420px;color:#d6d8db">Node</div>
<div class="t b" style="left:1053px;top:442px;color:#d6d8db">Process</div>
<div class="t b" style="left:1053px;top:464px;color:#d6d8db">Editor Description</div>
<div class="t yel" style="left:1047px;top:489px">Script</div>
<div class="t" style="left:1165px;top:489px">&lt;empty&gt;</div>
<div class="t" style="left:1115px;top:521px">Add Metadata</div>
<svg class="ov">
<use href="#kebabg" x="1260" y="52" width="4" height="16"/>
<g><path d="M1043 86h7l4 4v11h-11z" fill="#dcdcdc"/><path d="M1050 86v4h4" fill="#9a9da2"/><path d="M1053 94v8M1049 98h8" stroke="#5fd068" stroke-width="2.2"/></g>
<g><path d="M1074 89h5l1.5 1.5H1088v10h-14z" fill="#dcdcdc"/><path d="M1076 93h12l-2 7.5h-12z" fill="#363d4a" opacity="0.5"/></g>
<g><path d="M1106 86h11l3 3v11h-14z" fill="#777b82"/><rect x="1109" y="86" width="7" height="4" fill="#363d4a"/><circle cx="1113" cy="95" r="1.8" fill="#363d4a"/></g>
<use href="#kebab" x="1143" y="85" width="4" height="16"/>
<path d="M1204 87l-5 6 5 6" fill="none" stroke="#e0e0e0" stroke-width="2"/>
<path d="M1222 87l5 6-5 6" fill="none" stroke="#777b82" stroke-width="2"/>
<g fill="none" stroke="#e0e0e0" stroke-width="2"><path d="M1247.5 91a6 6 0 1 1 1.5 5"/><path d="M1253.5 89v4h3"/></g><path d="M1245 89l2.5 3.5 3-2.5z" fill="#e0e0e0"/>
<use href="#animt" x="1040" y="116" width="14" height="14"/>
<path d="M1219 120l4.5 4.5 4.5-4.5" fill="none" stroke="#e0e0e0" stroke-width="2"/>
<g fill="none" stroke="#e0e0e0" stroke-width="1.8"><circle cx="1254" cy="119.5" r="3.5"/><path d="M1251.5 122l-3 3"/></g>
<g fill="#e0e0e0" font-size="8" font-weight="bold"><text x="1244" y="131.5" font-family="Liberation Sans" letter-spacing="-0.6">DOC</text></g>
<use href="#search" x="1214" y="146" width="13" height="13"/>
<g fill="#e0e0e0"><rect x="1247" y="146" width="2" height="6"/><path d="M1246 152h4v5a2 2 0 0 1-4 0z"/><path d="M1254 146v3h3v-3h1.5v4l-2 2v8h-2v-8l-2-2v-4z"/></g>
<use href="#animt" x="1089" y="179" width="14" height="14"/>
<g><path d="M1165 204l7 3.5v7.5l-7 3.5-7-3.5v-7.5z" fill="#e0e0e0"/><path d="M1158.5 208l6.5 3.2 6.5-3.2M1165 211.2v7" stroke="#20242b" stroke-width="1.2" fill="none"/></g>
<path d="M1246 209l4 4 4-4" fill="none" stroke="#a3a6ab" stroke-width="1.8"/>
<use href="#animp" x="1158" y="236" width="14" height="14"/>
<use href="#animt" x="1158" y="268" width="14" height="14"/>
<g fill="#e0e0e0"><rect x="1247.5" y="236" width="3" height="6"/><path d="M1244 242h10v3h-10z"/><path d="M1244 246h10v4h-10z" opacity="0.9"/></g>
<g fill="#e0e0e0"><rect x="1247.5" y="268" width="3" height="6"/><path d="M1244 274h10v3h-10z"/><path d="M1244 278h10v4h-10z" opacity="0.9"/></g>
<rect x="1156" y="299" width="14" height="14" rx="2" fill="#6ab3f5"/><path d="M1159 306l3 3 5-5.5" fill="none" stroke="#ffffff" stroke-width="2"/>
<path d="M1248 334l5 5 5-5" fill="none" stroke="#e0e0e0" stroke-width="2"/>
<g fill="none" stroke="#8b8e94" stroke-width="1.6"><path d="M1046 358.5l3 3.5-3 3.5M1046 380.5l3 3.5-3 3.5M1046 402.5l3 3.5-3 3.5M1046 446.5l3 3.5-3 3.5M1046 468.5l3 3.5-3 3.5"/></g>
<circle cx="1129" cy="428" r="5" fill="none" stroke="#e0e0e0" stroke-width="2"/>
<path d="M1246 495l4 4 4-4" fill="none" stroke="#a3a6ab" stroke-width="1.8"/>
<path d="M1075 522v14M1068 529h14" stroke="#e0e0e0" stroke-width="2"/>
</svg>
</body></html>
